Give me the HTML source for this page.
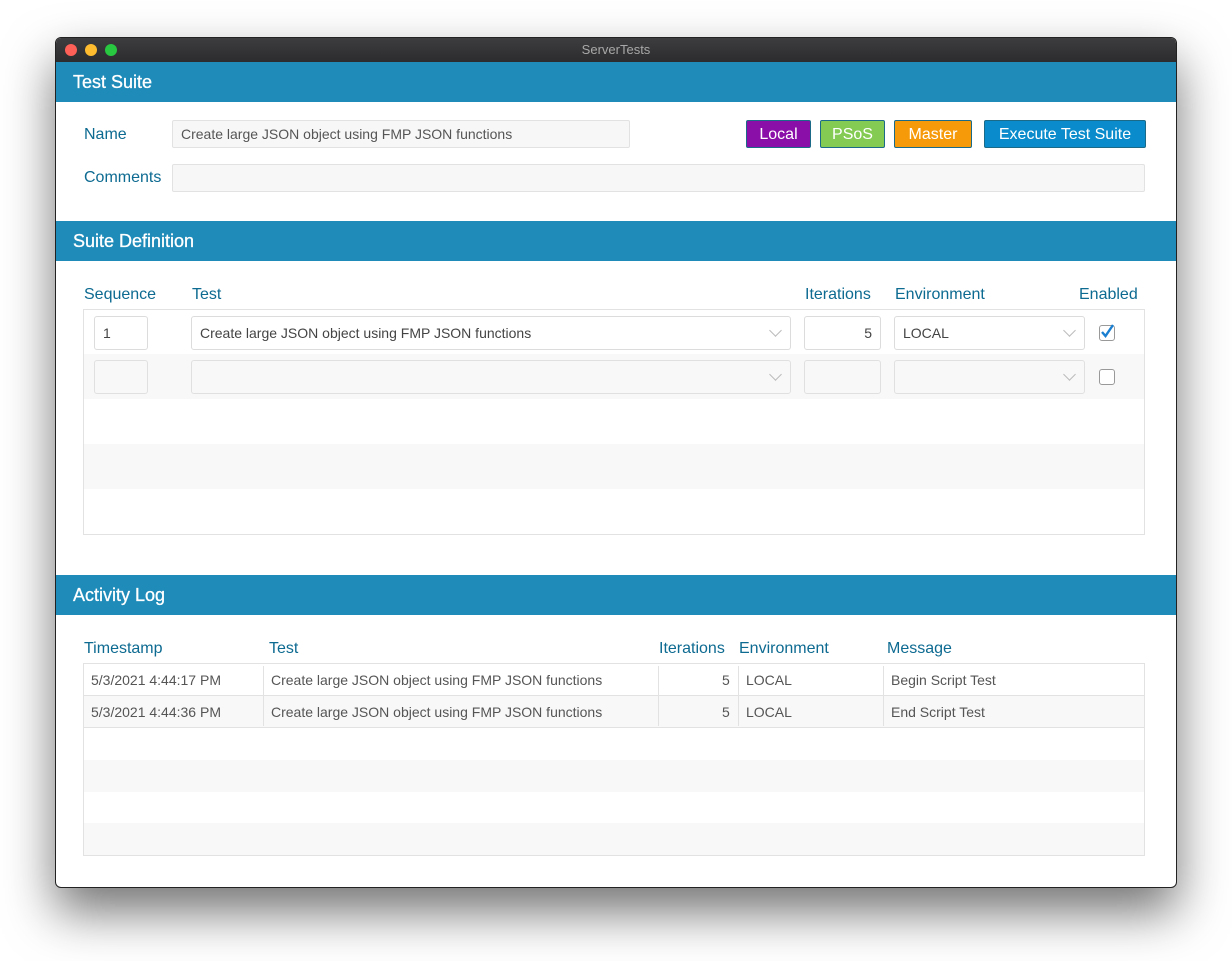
<!DOCTYPE html>
<html><head><meta charset="utf-8"><style>
*{box-sizing:border-box;margin:0;padding:0}
html,body{width:1232px;height:961px;background:#fff;overflow:hidden;font-family:"Liberation Sans",Arial,sans-serif}
.a{position:absolute}
#win{position:absolute;left:55px;top:37px;width:1122px;height:851px;border:1px solid #222;border-radius:6px;background:#fff;overflow:hidden;box-shadow:0 24px 50px rgba(0,0,0,.55)}
#tb{left:0;top:0;width:1120px;height:24px;background:linear-gradient(#3d3d3f,#2c2c2e);color:#a8a8a8;font-size:13px;text-align:center;line-height:24px}
.dot{width:12px;height:12px;border-radius:50%;top:6px}
.hd{left:0;width:1120px;height:40px;background:#1f8bb9;color:#fff;font-size:18px;line-height:41px;padding-left:17px;-webkit-text-stroke:0.3px #fff}
.lb{color:#0d6a91;font-size:16px}
.fld{background:#f7f7f7;border:1px solid #e2e2e2;border-radius:2px;font-size:14px;color:#555;line-height:26px;padding-left:8px}
.btn{height:28px;border:1px solid #1a6a88;color:#fff;font-size:16px;text-align:center;line-height:28px;border-radius:2px}
.in{background:#fff;border:1px solid #dcdcdc;border-radius:3px;font-size:14px;color:#444;line-height:32px;padding-left:8px;height:34px}
.in2{background:#f8f8f8;border:1px solid #e0e0e0;border-radius:3px;height:34px}
.chev{position:absolute;right:10px;top:9px;width:9px;height:9px;border-right:1px solid #bbb;border-bottom:1px solid #bbb;transform:rotate(45deg)}
.cb{width:16px;height:16px;border:1px solid #999;border-radius:3px;background:#fff}
.tc{font-size:14px;color:#555;line-height:32px}
.vl{width:1px;background:#e2e2e2}
</style></head><body>
<div id="win">
<div id="tb" class="a">ServerTests</div>
<div class="a dot" style="left:9px;background:#fe5f57"></div>
<div class="a dot" style="left:29px;background:#febc2e"></div>
<div class="a dot" style="left:49px;background:#28c840"></div>

<div class="a hd" style="top:24px">Test Suite</div>
<div class="a lb" style="left:28px;top:88px">Name</div>
<div class="a fld" style="left:116px;top:82px;width:458px;height:28px">Create large JSON object using FMP JSON functions</div>
<div class="a lb" style="left:28px;top:131px">Comments</div>
<div class="a fld" style="left:116px;top:126px;width:973px;height:28px"></div>
<div class="a btn" style="left:690px;top:82px;width:65px;background:#8a0fa8">Local</div>
<div class="a btn" style="left:764px;top:82px;width:65px;background:#84cb53">PSoS</div>
<div class="a btn" style="left:838px;top:82px;width:78px;background:#f79a0a">Master</div>
<div class="a btn" style="left:928px;top:82px;width:162px;background:#0a8ccc">Execute Test Suite</div>

<div class="a hd" style="top:183px">Suite Definition</div>
<div class="a lb" style="left:28px;top:248px">Sequence</div>
<div class="a lb" style="left:136px;top:248px">Test</div>
<div class="a lb" style="left:749px;top:248px">Iterations</div>
<div class="a lb" style="left:839px;top:248px">Environment</div>
<div class="a lb" style="left:1023px;top:248px">Enabled</div>
<div class="a" style="left:27px;top:271px;width:1062px;height:226px;border:1px solid #e2e2e2"></div>
<div class="a" style="left:28px;top:316px;width:1060px;height:45px;background:#f8f8f8"></div>
<div class="a" style="left:28px;top:406px;width:1060px;height:45px;background:#f8f8f8"></div>
<div class="a in" style="left:38px;top:278px;width:54px">1</div>
<div class="a in" style="left:135px;top:278px;width:600px">Create large JSON object using FMP JSON functions<div class="chev"></div></div>
<div class="a in" style="left:748px;top:278px;width:77px;text-align:right;padding-right:8px">5</div>
<div class="a in" style="left:838px;top:278px;width:191px">LOCAL<div class="chev"></div></div>
<div class="a cb" style="left:1043px;top:287px"><svg width="16" height="16" viewBox="0 0 16 16" style="position:absolute;left:-1px;top:-3px"><path d="M3 9 L6.5 13 L14 2" stroke="#1a7fd0" stroke-width="2.4" fill="none"/></svg></div>
<div class="a in2" style="left:38px;top:322px;width:54px"></div>
<div class="a in2" style="left:135px;top:322px;width:600px"><div class="chev"></div></div>
<div class="a in2" style="left:748px;top:322px;width:77px"></div>
<div class="a in2" style="left:838px;top:322px;width:191px"><div class="chev"></div></div>
<div class="a cb" style="left:1043px;top:331px"></div>

<div class="a hd" style="top:537px">Activity Log</div>
<div class="a lb" style="left:28px;top:602px">Timestamp</div>
<div class="a lb" style="left:213px;top:602px">Test</div>
<div class="a lb" style="left:603px;top:602px">Iterations</div>
<div class="a lb" style="left:683px;top:602px">Environment</div>
<div class="a lb" style="left:831px;top:602px">Message</div>
<div class="a" style="left:27px;top:625px;width:1062px;height:193px;border:1px solid #e2e2e2"></div>
<div class="a" style="left:28px;top:657px;width:1060px;height:33px;background:#f8f8f8;border-top:1px solid #e2e2e2;border-bottom:1px solid #e2e2e2"></div>
<div class="a" style="left:28px;top:722px;width:1060px;height:32px;background:#f8f8f8"></div>
<div class="a" style="left:28px;top:785px;width:1060px;height:32px;background:#f8f8f8"></div>
<div class="a vl" style="left:207px;top:628px;height:60px"></div>
<div class="a vl" style="left:602px;top:628px;height:60px"></div>
<div class="a vl" style="left:682px;top:628px;height:60px"></div>
<div class="a vl" style="left:827px;top:628px;height:60px"></div>
<div class="a tc" style="left:35px;top:626px">5/3/2021 4:44:17 PM</div>
<div class="a tc" style="left:215px;top:626px">Create large JSON object using FMP JSON functions</div>
<div class="a tc" style="left:666px;top:626px">5</div>
<div class="a tc" style="left:690px;top:626px">LOCAL</div>
<div class="a tc" style="left:835px;top:626px">Begin Script Test</div>
<div class="a tc" style="left:35px;top:658px">5/3/2021 4:44:36 PM</div>
<div class="a tc" style="left:215px;top:658px">Create large JSON object using FMP JSON functions</div>
<div class="a tc" style="left:666px;top:658px">5</div>
<div class="a tc" style="left:690px;top:658px">LOCAL</div>
<div class="a tc" style="left:835px;top:658px">End Script Test</div>
</div>
</body></html>
